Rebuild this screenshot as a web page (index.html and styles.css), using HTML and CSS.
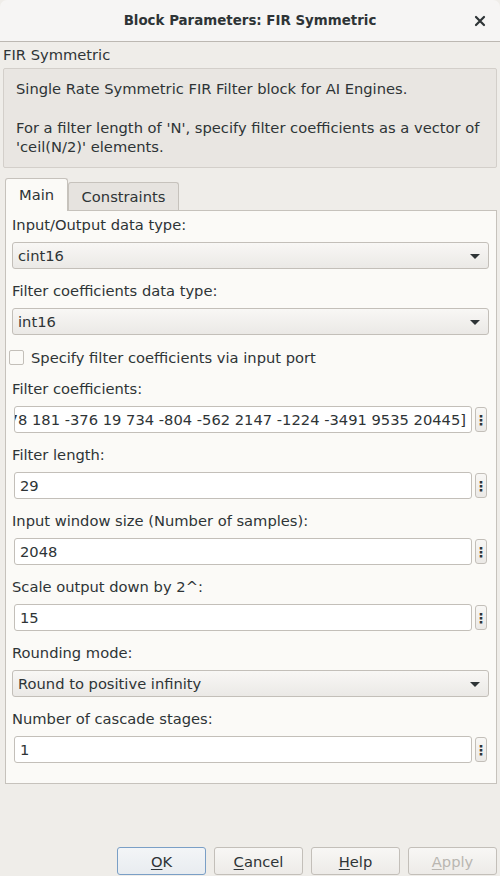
FILE: index.html
```html
<!DOCTYPE html>
<html>
<head>
<meta charset="utf-8">
<link rel="stylesheet" href="styles.css">
</head>
<body>
<div class="window">
  <div class="titlebar">
    <span class="title">Block Parameters: FIR Symmetric</span>
    <svg class="close" width="12" height="12" viewBox="0 0 12 12"><path d="M2 2L10 10M10 2L2 10" stroke="#2e3436" stroke-width="2.2" stroke-linecap="round"/></svg>
  </div>
  <div class="content">
    <div class="block-name">FIR Symmetric</div>
    <div class="desc">
      <p>Single Rate Symmetric FIR Filter block for AI Engines.</p>
      <p class="gap">For a filter length of 'N', specify filter coefficients as a vector of 'ceil(N/2)' elements.</p>
    </div>
    <div class="tabs">
      <div class="tab active">Main</div>
      <div class="tab">Constraints</div>
    </div>
    <div class="panel">
      <div class="row">
        <div class="label">Input/Output data type:</div>
        <div class="select"><span>cint16</span><span class="arrow"></span></div>
      </div>
      <div class="row">
        <div class="label">Filter coefficients data type:</div>
        <div class="select"><span>int16</span><span class="arrow"></span></div>
      </div>
      <div class="row check-row">
        <span class="checkbox"></span><span>Specify filter coefficients via input port</span>
      </div>
      <div class="row">
        <div class="label">Filter coefficients:</div>
        <div class="edit-row">
          <div class="input scrolled"><span>[-34 -50 112 -178 181 -376 19 734 -804 -562 2147 -1224 -3491 9535 20445]</span></div>
          <div class="more">⋮</div>
        </div>
      </div>
      <div class="row">
        <div class="label">Filter length:</div>
        <div class="edit-row">
          <div class="input"><span>29</span></div>
          <div class="more">⋮</div>
        </div>
      </div>
      <div class="row">
        <div class="label">Input window size (Number of samples):</div>
        <div class="edit-row">
          <div class="input"><span>2048</span></div>
          <div class="more">⋮</div>
        </div>
      </div>
      <div class="row">
        <div class="label">Scale output down by 2^:</div>
        <div class="edit-row">
          <div class="input"><span>15</span></div>
          <div class="more">⋮</div>
        </div>
      </div>
      <div class="row">
        <div class="label">Rounding mode:</div>
        <div class="select"><span>Round to positive infinity</span><span class="arrow"></span></div>
      </div>
      <div class="row">
        <div class="label">Number of cascade stages:</div>
        <div class="edit-row">
          <div class="input"><span>1</span></div>
          <div class="more">⋮</div>
        </div>
      </div>
    </div>
    <div class="buttons">
      <div class="btn default"><u>O</u>K</div>
      <div class="btn"><u>C</u>ancel</div>
      <div class="btn"><u>H</u>elp</div>
      <div class="btn disabled"><u>A</u>pply</div>
    </div>
  </div>
</div>
</body>
</html>
```

FILE: styles.css
```css
* { box-sizing: border-box; }
html, body {
  margin: 0;
  padding: 0;
  width: 500px;
  height: 876px;
  overflow: hidden;
  background: #efede9;
  font-family: "DejaVu Sans", sans-serif;
  font-size: 14.7px;
  color: #2e3436;
}
.window {
  width: 500px;
  height: 876px;
  display: flex;
  flex-direction: column;
}
.titlebar {
  height: 42px;
  flex: none;
  background: #f6f5f4;
  border-bottom: 1px solid #bcb8b2;
  display: flex;
  align-items: center;
  justify-content: center;
  position: relative;
  border-radius: 7px 7px 0 0;
}
.title {
  font-weight: bold;
  font-size: 13.4px;
  color: #2e3436;
}
.close {
  position: absolute;
  right: 14px;
  top: 15px;
}
.content {
  flex: 1;
  display: flex;
  flex-direction: column;
  padding: 0 3px 0 3px;
}
.block-name {
  height: 26px;
  padding-top: 3px;
  line-height: 20px;
}
.desc {
  height: 100px;
  background: #e9e6e2;
  border: 1px solid #d3cfca;
  border-radius: 2px;
  padding: 10px 12px 0 12px;
  line-height: 19.5px;
}
.desc p { margin: 0; }
.desc p.gap { margin-top: 19px; }
.tabs {
  display: flex;
  align-items: flex-end;
  margin-top: 10px;
  margin-left: 2px;
  height: 32px;
  position: relative;
  z-index: 1;
}
.tab {
  height: 28px;
  display: flex;
  align-items: center;
  justify-content: center;
  background: #e6e3df;
  border: 1px solid #c6c2bc;
  border-bottom: none;
  border-radius: 3px 3px 0 0;
}
.tab.active {
  background: #fbfaf7;
  padding-bottom: 2px;
  width: 63px;
  margin-bottom: -1px;
  height: 33px;
  position: relative;
  z-index: 2;
}
.tab:not(.active) { width: 111px; }
.panel {
  margin-left: 2px;
  height: 574px;
  background: #fbfaf7;
  border: 1px solid #c6c2bc;
  padding: 4px 7px 0 6px;
  display: flex;
  flex-direction: column;
  gap: 12px;
}
.row { display: flex; flex-direction: column; }
.label {
  line-height: 20px;
  height: 20px;
  margin-bottom: 7px;
  white-space: nowrap;
}
.select {
  height: 27px;
  border: 1px solid #c3bfb9;
  border-radius: 3px;
  background: linear-gradient(#f8f7f5, #ebe9e6);
  display: flex;
  align-items: center;
  justify-content: space-between;
  padding: 0 8px 0 5px;
}
.arrow {
  width: 0;
  height: 0;
  border-left: 5px solid transparent;
  border-right: 5px solid transparent;
  border-top: 5px solid #2e3436;
  margin-top: 2px;
}
.check-row {
  flex-direction: row;
  align-items: center;
  height: 20px;
  margin-left: -3px;
  gap: 7px;
}
.checkbox {
  width: 15px;
  height: 15px;
  border: 1px solid #c3bfb9;
  border-radius: 2px;
  background: #fbfaf7;
}
.edit-row {
  display: flex;
  align-items: center;
  gap: 3px;
  padding: 0 2px;
  height: 27px;
}
.input {
  flex: 1;
  height: 27px;
  background: #ffffff;
  border: 1px solid #c3bfb9;
  border-radius: 3px;
  display: flex;
  align-items: center;
  padding: 0 5px;
  overflow: hidden;
  white-space: nowrap;
}
.input.scrolled { justify-content: flex-end; }
.more {
  width: 12px;
  height: 25px;
  border: 1px solid #c3bfb9;
  border-radius: 3px;
  background: linear-gradient(#f8f7f5, #ebe9e6);
  display: flex;
  align-items: center;
  justify-content: center;
  font-weight: bold;
  font-size: 14px;
}
.buttons {
  display: flex;
  justify-content: flex-end;
  gap: 8px;
  margin-top: auto;
  margin-bottom: 1px;
}
.btn {
  width: 89px;
  height: 28px;
  border: 1px solid #c3bfb9;
  border-radius: 3px;
  background: linear-gradient(#f8f7f5, #edebe8);
  display: flex;
  align-items: center;
  justify-content: center;
}
.btn.default {
  border-color: #7a9fc6;
  background: linear-gradient(#f3f5f7, #e8ecf0);
}
.btn.disabled { color: #b9b6b1; }
.btn u { text-underline-offset: 2px; }
```
